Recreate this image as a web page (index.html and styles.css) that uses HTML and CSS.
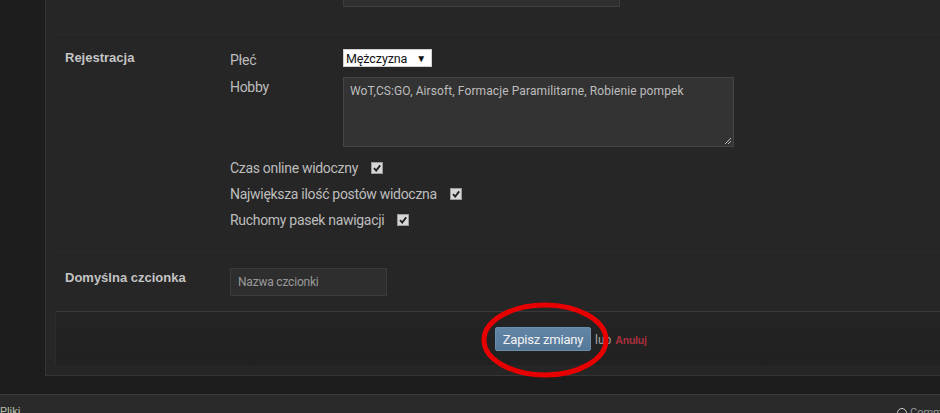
FILE: index.html
```html
<!DOCTYPE html>
<html lang="pl">
<head>
<meta charset="utf-8">
<title>Ustawienia profilu</title>
<link rel="stylesheet" href="styles.css">
</head>
<body>
<div class="page">
  <div class="panel">
    <div class="row prev-row">
      <div class="input-tail"></div>
    </div>

    <section class="row">
      <h3 class="row-label">Rejestracja</h3>
      <div class="row-body">
        <div class="pair">
          <span class="pair-label">Płeć</span>
          <div class="select"><span>Mężczyzna</span><span class="select-arrow">▼</span></div>
        </div>
        <div class="pair pair-hobby">
          <span class="pair-label">Hobby</span>
          <div class="textarea">WoT,CS:GO, Airsoft, Formacje Paramilitarne, Robienie pompek
            <svg class="grip" width="6" height="6" viewBox="0 0 6 6"><path d="M0 6L6 0M3 6L6 3" stroke="#bbb" stroke-width="1"/></svg>
          </div>
        </div>
        <ul class="checks">
          <li>Czas online widoczny <span class="check"><svg width="10" height="10" viewBox="0 0 10 10"><path d="M2 5.2L4.2 7.6L8.2 2.4" fill="none" stroke="#222" stroke-width="1.9"/></svg></span></li>
          <li>Największa ilość postów widoczna <span class="check"><svg width="10" height="10" viewBox="0 0 10 10"><path d="M2 5.2L4.2 7.6L8.2 2.4" fill="none" stroke="#222" stroke-width="1.9"/></svg></span></li>
          <li>Ruchomy pasek nawigacji <span class="check"><svg width="10" height="10" viewBox="0 0 10 10"><path d="M2 5.2L4.2 7.6L8.2 2.4" fill="none" stroke="#222" stroke-width="1.9"/></svg></span></li>
        </ul>
      </div>
    </section>

    <section class="row row-font">
      <h3 class="row-label label-font">Domyślna czcionka</h3>
      <div class="row-body">
        <div class="text-input">Nazwa czcionki</div>
      </div>
    </section>

    <div class="submit-bar">
      <button class="btn-save" type="button">Zapisz zmiany</button>
      <span class="or">lub</span>
      <a class="cancel" href="#">Anuluj</a>
    </div>
  </div>

  <div class="bottom-bar">
    <span class="bottom-left">Pliki</span>
    <span class="bottom-right"><span class="dot"></span>Community</span>
  </div>

  <svg class="mark" width="136" height="84" viewBox="0 0 136 84">
    <ellipse cx="68" cy="42" rx="61" ry="35" fill="none" stroke="#e80000" stroke-width="5"/>
  </svg>
</div>
</body>
</html>
```

FILE: styles.css
```css
html, body {
  margin: 0;
  padding: 0;
}

body {
  background: #1d1d1d;
  font-family: Roboto, "Liberation Sans", sans-serif;
  color: #bdbdbd;
  width: 940px;
  height: 413px;
  overflow: hidden;
}

.page {
  position: relative;
  padding-left: 45px;
}

.panel {
  background: #262626;
  border-left: 1px solid #343434;
  border-bottom: 1px solid #353535;
  padding: 0 0 10px 9px;
}

.row {
  display: grid;
  grid-template-columns: 165px 1fr;
  padding-left: 10px;
  border-bottom: 1px solid #2b2b2b;
}

/* tail of the field above the fold */
.prev-row {
  display: block;
  height: 34px;
  padding-left: 288px;
}

.input-tail {
  width: 275px;
  height: 6px;
  background: #2f2f2f;
  border: 1px solid #3d3d3d;
  border-top: none;
}

.row-label {
  margin: 0;
  padding-top: 14px;
  font-family: "Liberation Sans", Arial, sans-serif;
  font-size: 13px;
  font-weight: bold;
  line-height: 18px;
  color: #c4c4c4;
}

.row-body {
  padding-top: 14px;
  padding-bottom: 18px;
}

.pair {
  display: flex;
  align-items: flex-start;
}

.pair-label {
  width: 113px;
  font-size: 14px;
  letter-spacing: -0.3px;
  line-height: 18px;
  padding-top: 2px;
}

.select {
  height: 16px;
  background: #fff;
  border: 1px solid #d0d0d0;
  display: flex;
  align-items: center;
  justify-content: space-between;
  padding: 0 5px 0 2px;
  box-sizing: content-box;
  width: 80px;
  font-size: 12.5px;
  letter-spacing: -0.1px;
  color: #111;
}

.select-arrow {
  font-size: 10px;
  color: #111;
}

.pair-hobby {
  margin-top: 8px;
}

.pair-hobby .pair-label {
  padding-top: 1px;
}

.textarea {
  position: relative;
  box-sizing: border-box;
  width: 391px;
  height: 70px;
  background: #333;
  border: 1px solid #454545;
  padding: 5px 6px;
  font-size: 12px;
  letter-spacing: 0.1px;
  line-height: 16px;
  color: #bdbdbd;
}

.grip {
  position: absolute;
  right: 2px;
  bottom: 2px;
}

.checks {
  list-style: none;
  margin: 8px 0 0;
  padding: 0;
}

.checks li {
  font-size: 14px;
  letter-spacing: -0.3px;
  line-height: 26px;
  display: flex;
  align-items: center;
}

.check {
  width: 12px;
  height: 12px;
  box-sizing: border-box;
  margin-left: 13px;
  margin-top: -1px;
  background: #d6d6d6;
  border: 1px solid #9a9a9a;
  display: flex;
  align-items: center;
  justify-content: center;
}

.row-font .row-body {
  padding-top: 16px;
  padding-bottom: 15px;
}

.label-font {
  padding-top: 15px;
  line-height: 21px;
}

.row-font {
  border-bottom: none;
}

.text-input {
  box-sizing: border-box;
  width: 157px;
  height: 28px;
  background: #2e2e2e;
  border: 1px solid #3b3b3b;
  padding: 0 7px;
  font-size: 12px;
  letter-spacing: -0.2px;
  line-height: 26px;
  color: #9a9a9a;
}

.submit-bar {
  box-sizing: border-box;
  height: 54px;
  border-top: 1px solid #383838;
  border-left: 1px solid #2c2c2c;
  background: linear-gradient(#242424, #212121);
  padding: 15px 0 0 439px;
  display: flex;
  align-items: flex-start;
}

.btn-save {
  box-sizing: border-box;
  width: 96px;
  height: 24px;
  border: 1px solid #6c8eae;
  border-radius: 2px;
  background: linear-gradient(#6285a6, #56789a);
  color: #f2f2f2;
  font-family: Roboto, "Liberation Sans", sans-serif;
  font-size: 13px;
  letter-spacing: -0.2px;
  padding: 0;
}

.or {
  margin-left: 4px;
  font-size: 12px;
  line-height: 26px;
  color: #a8a8a8;
}

.cancel {
  margin-left: 4px;
  font-family: "Liberation Sans", Arial, sans-serif;
  font-size: 10.5px;
  letter-spacing: -0.2px;
  font-weight: bold;
  line-height: 27px;
  color: #ab2f3c;
  text-decoration: none;
}

.bottom-bar {
  margin: 18px 0 0 -45px;
  height: 18px;
  border-top: 1px solid #3a3a3a;
  background: #2a2a2a;
  position: relative;
  font-size: 11px;
  color: #b8c0a8;
}

.bottom-left {
  position: absolute;
  left: 0;
  top: 10px;
}

.bottom-right {
  position: absolute;
  left: 897px;
  top: 11px;
  display: flex;
  align-items: center;
  color: #999;
}

.dot {
  width: 8px;
  height: 8px;
  border-radius: 50%;
  border: 1px solid #ccc;
  margin-right: 3px;
}

/* red highlight drawn over the save button */
.mark {
  position: absolute;
  left: 477px;
  top: 298px;
}
```
